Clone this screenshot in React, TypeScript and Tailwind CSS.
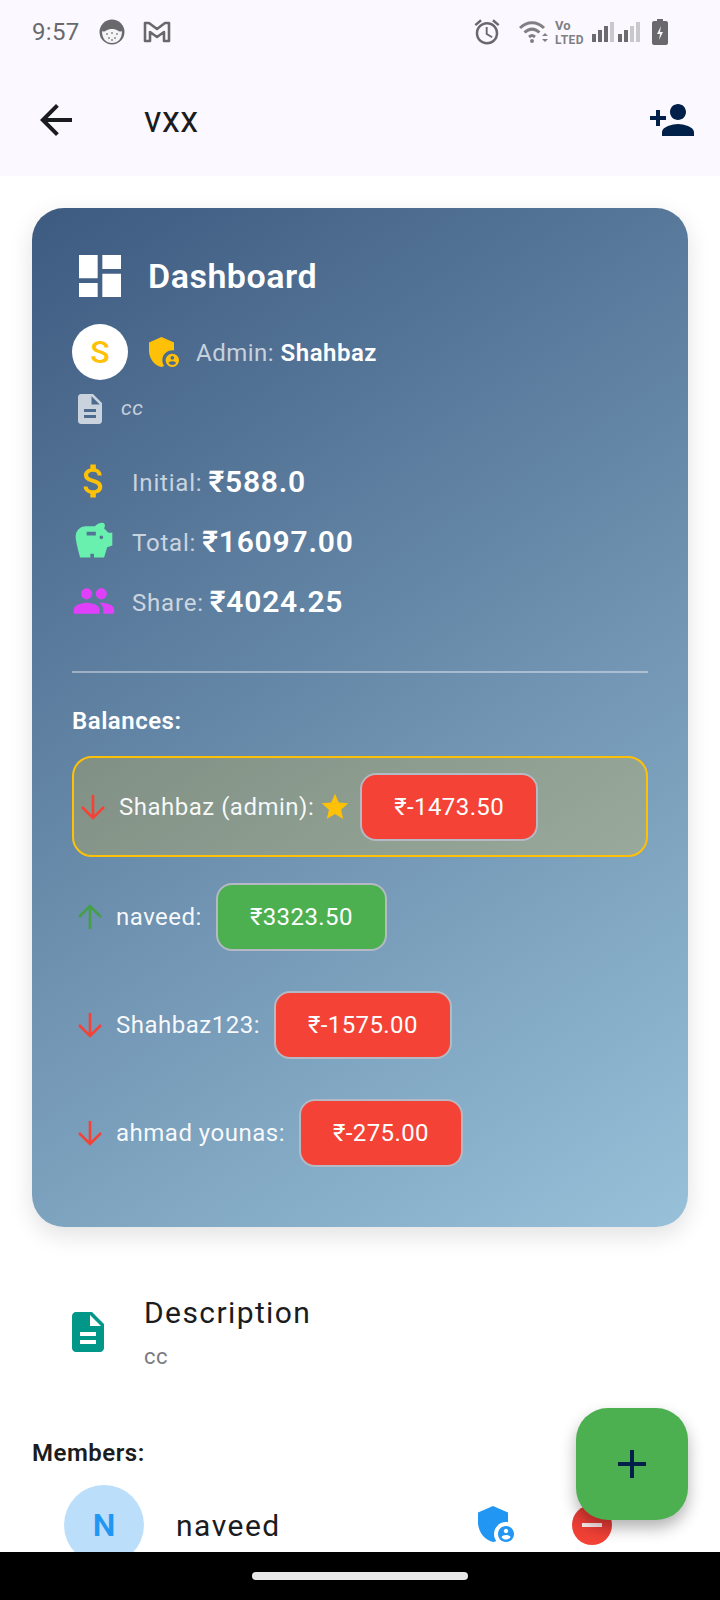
import {
  MdAdd,
  MdAdminPanelSettings,
  MdAlarm,
  MdArrowBack,
  MdAttachMoney,
  MdDashboard,
  MdDescription,
  MdPeople,
  MdPersonAdd,
  MdSavings,
  MdStar,
} from 'react-icons/md'

const balances = [
  { name: 'naveed', amount: '₹3323.50', up: true },
  { name: 'Shahbaz123', amount: '₹-1575.00', up: false },
  { name: 'ahmad younas', amount: '₹-275.00', up: false },
]

function SignalBars({ full }: { full: number }) {
  return (
    <div className="flex items-end gap-[2px] h-[20px]">
      {[8, 12, 16, 20].map((h, i) => (
        <div
          key={i}
          className={i < full ? 'w-[4px] bg-[#6b6b6f]' : 'w-[4px] bg-[#c9c8cd]'}
          style={{ height: h }}
        />
      ))}
    </div>
  )
}

function StatusBar() {
  return (
    <div className="flex items-center h-[64px] pl-[32px] pr-[52px] text-[#69696d]">
      <span className="text-[24px] tracking-[0.3px] leading-none w-[67px]">9:57</span>
      <svg width="26" height="26" viewBox="0 0 26 26" className="mr-[18px]">
        <circle cx="13" cy="13" r="12.500" fill="#69696d" />
        <path d="M3 12c3 2 4-2 10-2s7 4 10 2c0 8-4 12-10 12S3 20 3 12z" fill="#f4f3f6" />
        <g fill="#8b8b8f">
          <circle cx="8" cy="15" r="1" />
          <circle cx="13" cy="14" r="1" />
          <circle cx="18" cy="15" r="1" />
          <circle cx="10" cy="19" r="1" />
          <circle cx="16" cy="19" r="1" />
          <circle cx="13" cy="21" r="1" />
        </g>
      </svg>
      <svg width="28" height="22" viewBox="0 0 28 22" fill="none">
        <path
          d="M2 20V2h4l8 6 8-6h4v18h-5v-9l-7 5-7-5v9z"
          stroke="#69696d"
          strokeWidth="2.600"
          strokeLinejoin="round"
        />
      </svg>
      <div className="flex-1" />
      <MdAlarm size={30} className="mr-[17px]" />
      <svg width="30" height="24" viewBox="0 0 30 24" fill="none" className="mr-[6px]">
        <path d="M1 8c7-7 17-7 24 0" stroke="#808084" strokeWidth="3" />
        <path d="M5.500 12.500c5-4.500 10-4.500 15 0" stroke="#808084" strokeWidth="3" />
        <path d="M10 17c2.500-2 3.500-2 6 0" stroke="#808084" strokeWidth="3" />
        <circle cx="13" cy="21" r="2" fill="#808084" />
        <path d="M23 16l3-3 3 3zM23 19l3 3 3-3z" fill="#808084" />
      </svg>
      <div className="flex flex-col w-[30px] mr-[7px] text-[#808084] font-bold">
        <span className="text-[13px] leading-[15px] h-[15px]">Vo</span>
        <span className="text-[12px] leading-[14px] h-[14px] tracking-[0.5px]">LTED</span>
      </div>
      <SignalBars full={3} />
      <div className="w-[4px]" />
      <SignalBars full={2} />
      <svg width="16" height="26" viewBox="0 0 16 26" className="ml-[12px]">
        <path d="M5 0h6v2h3a2 2 0 0 1 2 2v20a2 2 0 0 1-2 2H2a2 2 0 0 1-2-2V4a2 2 0 0 1 2-2h3z" fill="#69696d" />
        <path d="M9 7l-4 8h3l-1 6 4-8H8z" fill="#f4f3f6" />
      </svg>
    </div>
  )
}

function AmountLine({ label, value, icon }: { label: string; value: string; icon: React.ReactNode }) {
  return (
    <div className="flex items-center h-[60px]">
      <div className="w-[44px] flex justify-center mr-[16px]">{icon}</div>
      <div className="flex items-baseline">
        <span className="text-[24px] tracking-[0.8px] text-white/70 mr-[6px] -translate-y-px">{label}</span>
        <span className="text-[30px] font-semibold tracking-[0.8px] text-white">{value}</span>
      </div>
    </div>
  )
}

function Chip({ amount, up }: { amount: string; up: boolean }) {
  return (
    <div
      className={
        (up ? 'bg-[#4caf50]' : 'bg-[#f44336]') +
        ' h-[68px] px-[32px] flex items-center rounded-[16px] border-2 border-[#b4b9c3] text-white text-[24px] tracking-[0.4px]'
      }
    >
      {amount}
    </div>
  )
}

function Arrow({ up }: { up: boolean }) {
  return (
    <svg
      width="26"
      height="26"
      viewBox="0 0 26 26"
      fill="none"
      stroke={up ? '#43a047' : '#f44336'}
      strokeWidth="2.600"
      className={up ? 'rotate-180 shrink-0' : 'shrink-0'}
    >
      <path d="M13 1v23M2 13l11 11 11-11" />
    </svg>
  )
}

export default function App() {
  return (
    <div className="relative w-[720px] h-[1600px] overflow-hidden bg-white font-['Roboto',sans-serif] text-[#1b1c20]">
      <header className="bg-[#fbf9ff] h-[176px]">
        <StatusBar />
        <div className="flex items-center h-[112px] pl-[32px] pr-[24px]">
          <MdArrowBack size={48} className="mr-[64px]" />
          <span className="text-[36px] tracking-[0.5px] flex-1">vxx</span>
          <MdPersonAdd size={48} className="text-[#00204a]" />
        </div>
      </header>

      <main className="px-[32px] pt-[32px]">
        <section className="h-[1019px] rounded-[32px] bg-[linear-gradient(147deg,#3d5a80,#98c1d9)] shadow-[0_8px_24px_rgba(0,0,0,0.12)] px-[40px] pt-[32px] text-white">
          <div className="flex items-center h-[72px]">
            <MdDashboard size={56} className="text-white" />
            <span className="ml-[20px] text-[34px] font-semibold tracking-[0.5px]">Dashboard</span>
          </div>
          <div className="flex items-center h-[56px] mt-[12px]">
            <div className="w-[56px] h-[56px] rounded-full bg-white flex items-center justify-center text-[#ffc107] text-[32px] font-medium">
              S
            </div>
            <MdAdminPanelSettings size={40} className="ml-[16px] text-[#ffc107]" />
            <span className="ml-[12px] mt-[2px] text-[24px] tracking-[0.5px] text-white/70">
              Admin: <span className="font-semibold text-white">Shahbaz</span>
            </span>
          </div>
          <div className="flex items-center h-[32px] mt-[13px]">
            <MdDescription size={36} className="text-white/70" />
            <span className="ml-[13px] text-[21px] italic tracking-[0.5px] text-white/70">cc</span>
          </div>

          <div className="mt-[26px]">
            <AmountLine label="Initial:" value="₹588.0" icon={<MdAttachMoney size={44} className="text-[#ffc107]" />} />
            <AmountLine label="Total:" value="₹16097.00" icon={<MdSavings size={44} className="text-[#69f0ae]" />} />
            <AmountLine label="Share:" value="₹4024.25" icon={<MdPeople size={44} className="text-[#e040fb]" />} />
          </div>

          <div className="h-[2px] bg-white/40 mt-[40px]" />

          <h3 className="mt-[34px] text-[24px] font-semibold tracking-[0.5px] leading-[28px]">Balances:</h3>

          <div className="mt-[21px] h-[101px] rounded-[20px] border-2 border-[#ffc107] bg-[#ffc107]/20 flex items-center pl-[6px]">
            <Arrow up={false} />
            <span className="ml-[13px] text-[24px] tracking-[0.5px] text-white/95">Shahbaz (admin):</span>
            <MdStar size={32} className="ml-[5px] text-[#ffc107]" />
            <div className="ml-[9px]">
              <Chip amount="₹-1473.50" up={false} />
            </div>
          </div>

          <div className="flex flex-col gap-[40px] mt-[26px]">
            {balances.map(row => (
              <div key={row.name} className="flex items-center h-[68px] pl-[5px]">
                <Arrow up={row.up} />
                <span className="ml-[13px] mr-[14px] text-[24px] tracking-[0.5px] text-white/95">{row.name}:</span>
                <Chip amount={row.amount} up={row.up} />
              </div>
            ))}
          </div>
        </section>

        <div className="flex mt-[59px] pl-[32px]">
          <MdDescription size={48} className="mt-[22px] text-[#009688]" />
          <div className="ml-[32px]">
            <div className="text-[30px] tracking-[1.4px] leading-[50px] pt-[2px]">Description</div>
            <div className="text-[22px] tracking-[0.5px] text-[#7b7b7f] mt-[5px] leading-[28px]">cc</div>
          </div>
        </div>

        <h3 className="mt-[68px] text-[24px] font-semibold tracking-[0.5px] leading-[28px]">Members:</h3>

        <div className="flex items-center h-[80px] mt-[18px] pl-[32px]">
          <div className="w-[80px] h-[80px] shrink-0 rounded-full bg-[#bbdefb] flex items-center justify-center text-[#2196f3] text-[32px] font-semibold">
            N
          </div>
          <span className="ml-[32px] text-[30px] tracking-[1.5px] flex-1">naveed</span>
          <MdAdminPanelSettings size={48} className="-mt-[3px] text-[#2196f3]" />
          <div className="ml-[52px] mr-[76px] w-[40px] h-[40px] rounded-full bg-gradient-to-b from-[#e53935] to-[#f44336] flex items-center justify-center -mt-[1px]">
            <div className="w-[20px] h-[4px] bg-white/90" />
          </div>
        </div>
      </main>

      <button className="absolute left-[576px] top-[1408px] w-[112px] h-[112px] rounded-[32px] bg-[#4caf50] shadow-[0_8px_16px_rgba(0,0,0,0.3)] flex items-center justify-center text-[#00204a]">
        <MdAdd size={48} />
      </button>

      <div className="absolute left-0 right-0 bottom-0 h-[48px] bg-black flex items-center justify-center">
        <div className="w-[216px] h-[8px] rounded-full bg-[#e8e8e8]" />
      </div>
    </div>
  )
}
